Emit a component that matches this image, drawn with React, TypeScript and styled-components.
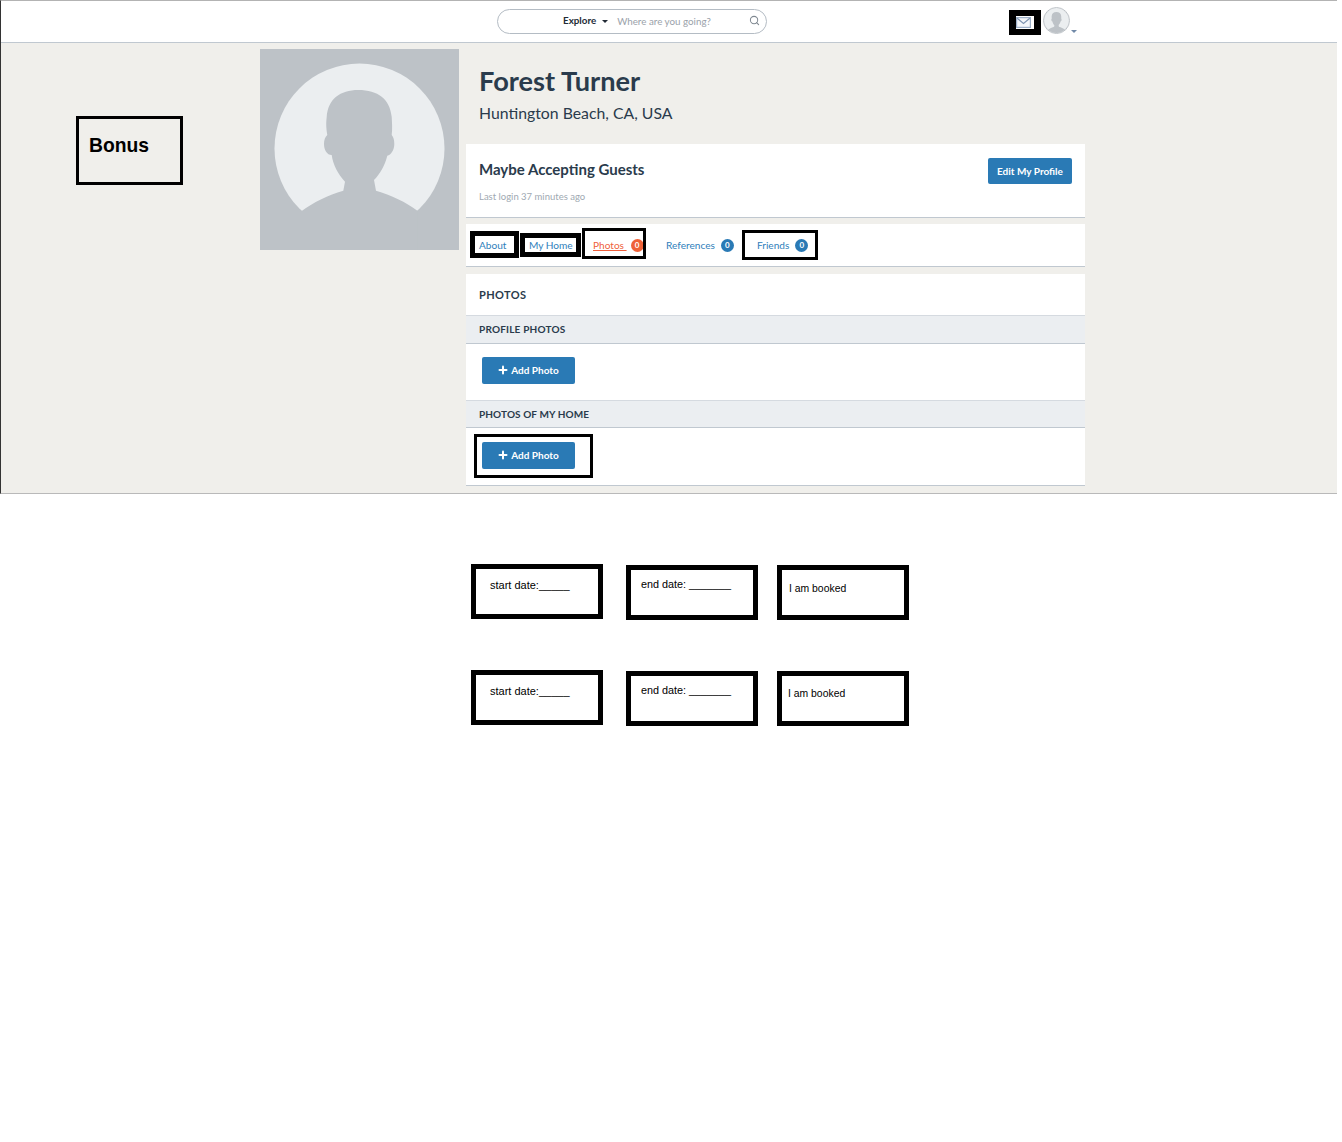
import { Plus, Search } from "lucide-react"
import styled, { createGlobalStyle } from "styled-components"

const Global = createGlobalStyle`
html, body {
  margin: 0;
  background: #fff;
}
* {
  box-sizing: border-box;
}
`

const Page = styled.div`
width: 1337px;
height: 1142px;
overflow: hidden;
background: #fff;
font-family: Lato, "Open Sans", sans-serif;
`

const Shot = styled.div`
height: 494px;
border-top: 1px solid #b3b3b3;
border-left: 1px solid #333;
border-bottom: 1px solid #b9b9b9;
background: #f0efeb;
`

const Header = styled.header`
height: 42px;
background: #fff;
border-bottom: 1px solid #c0c8d0;
display: flex;
align-items: flex-start;
padding: 8px 0 0 496px;
`

const SearchPill = styled.div`
width: 270px;
height: 25px;
border: 1px solid #b4bcc4;
border-radius: 13px;
display: flex;
align-items: center;
padding-left: 65px;
font-size: 9.8px;
`

const Explore = styled.span`
color: #222b36;
font-weight: 700;
margin-top: -4px;
`

const Caret = styled.span<{ $color: string }>`
width: 0;
height: 0;
border: 3px solid transparent;
border-top: 3px solid ${props => props.$color};
border-bottom: 0;
`

const ExploreCaret = styled(Caret)`
margin: -1px 9px 0 6px;
`

const Placeholder = styled.span`
color: #9aa2aa;
flex: 1;
margin-top: -2px;
`

const SearchIcon = styled(Search)`
color: #7f8891;
margin: -2px 6px 0 0;
`

const MailBox = styled.div`
margin: 1px 0 0 242px;
width: 32px;
height: 25px;
border: solid #000;
border-width: 6px 7px;
background: #fff;
display: flex;
align-items: center;
justify-content: flex-start;
`

const UserMenu = styled.div`
margin: -2px 0 0 2px;
display: flex;
align-items: flex-end;
gap: 1px;
`

const UserThumb = styled.svg`
width: 27px;
height: 27px;
border-radius: 50%;
border: 1px solid #bdc2c7;
display: block;
`

const UserCaret = styled(Caret)`
margin-bottom: 1px;
border-width: 3.5px;
border-bottom: 0;
`

const Main = styled.main`
display: flex;
align-items: flex-start;
padding-left: 75px;
`

const Bonus = styled.div`
width: 107px;
height: 69px;
margin: 73px 77px 0 0;
border: 3px solid #000;
padding: 16px 0 0 10px;
font-family: "Liberation Sans", Arial, sans-serif;
font-size: 19.3px;
font-weight: 700;
color: #000;
`

const Avatar = styled.svg`
width: 199px;
height: 201px;
margin-top: 6px;
flex-shrink: 0;
display: block;
`

const Column = styled.div`
width: 619px;
margin-left: 7px;
`

const Intro = styled.div`
height: 101px;
padding: 21px 0 0 13px;
`

const Name = styled.h1`
margin: 0;
font-size: 27.2px;
line-height: 34px;
font-weight: 700;
color: #2a3b4c;
`

const Location = styled.div`
margin-top: 4px;
font-size: 15.8px;
line-height: 22px;
color: #2a3b4c;
`

const Panel = styled.section`
background: #fff;
border-bottom: 1px solid #c0c8d0;
`

const StatusPanel = styled(Panel)`
height: 74px;
padding: 14px 13px 0;
display: flex;
justify-content: space-between;
align-items: flex-start;
`

const Status = styled.div`
font-size: 15px;
line-height: 22px;
font-weight: 700;
color: #2a3b4c;
`

const LastLogin = styled.div`
margin-top: 10px;
font-size: 9.5px;
line-height: 14px;
color: #a0a9b2;
`

const Button = styled.button`
border: 0;
border-radius: 2px;
background: #2a7ab5;
color: #fff;
font-family: inherit;
font-weight: 700;
font-size: 10px;
padding: 0;
display: flex;
align-items: center;
justify-content: center;
`

const EditButton = styled(Button)`
width: 84px;
height: 26px;
`

const TabsPanel = styled(Panel)`
height: 43px;
margin: 6px 0 7px;
padding-left: 13px;
display: flex;
`

const Tab = styled.div<{ $w: number; $active?: boolean }>`
position: relative;
width: ${props => props.$w}px;
height: 42px;
padding-top: 15px;
font-size: 10.1px;
line-height: 13px;
color: ${props => (props.$active ? "#ef5f3c" : "#2f80bb")};
display: flex;
align-items: flex-start;
white-space: pre;
`

const TabLabel = styled.span<{ $active?: boolean }>`
text-decoration: ${props => (props.$active ? "underline" : "none")};
`

const Badge = styled.span<{ $active?: boolean }>`
width: 13px;
height: 13px;
margin-left: ${props => (props.$active ? 4 : 6)}px;
border-radius: 50%;
background: ${props => (props.$active ? "#ef6238" : "#2a7ab5")};
color: #fff;
font-size: 8px;
font-weight: 700;
line-height: 13px;
text-align: center;
`

const Mark = styled.div<{ $left: number; $top: number; $w: number; $h: number; $b: number }>`
position: absolute;
left: ${props => props.$left}px;
top: ${props => props.$top}px;
width: ${props => props.$w}px;
height: ${props => props.$h}px;
border: ${props => props.$b}px solid #000;
pointer-events: none;
`

const PhotosTitle = styled.div`
height: 41px;
padding: 14px 13px 0;
font-size: 11px;
line-height: 14px;
font-weight: 700;
letter-spacing: 0.35px;
color: #2a3b4c;
background: #fff;
`

const SectionTitle = styled.div<{ $h: number; $track: number }>`
height: ${props => props.$h}px;
padding-left: 13px;
background: #ebeef1;
border-top: 1px solid #d5dae0;
border-bottom: 1px solid #c0c8d0;
font-size: 10px;
line-height: 26px;
font-weight: 700;
letter-spacing: ${props => props.$track}px;
color: #2a3b4c;
`

const SectionBody = styled.div<{ $h: number; $pad: number; $line?: boolean }>`
position: relative;
height: ${props => props.$h}px;
padding: ${props => props.$pad}px 0 0 16px;
background: #fff;
border-bottom: ${props => (props.$line ? "1px solid #c0c8d0" : "0")};
`

const AddButton = styled(Button)`
width: 93px;
height: 27px;
gap: 2px;
padding: 0 1px 1px 0;
`

const Wireframe = styled.div`
padding: 70px 0 0 471px;
font-family: "Liberation Sans", Arial, sans-serif;
color: #000;
`

const NoteRow = styled.div`
display: flex;
align-items: flex-start;
height: 106px;
`

const Note = styled.div<{ $gap: number; $drop: number; $pad: string; $size: number }>`
width: 132px;
height: 55px;
margin-left: ${props => props.$gap}px;
margin-top: ${props => props.$drop}px;
border: 5px solid #000;
padding: ${props => props.$pad};
font-size: ${props => props.$size}px;
line-height: 14px;
white-space: pre;
`

const silhouette =
  "M41.7 162 C54 153 68 146 83.3 141.7 L85 132.7 C78 125 73 116 71.7 106 C67 106 64 101 64 95 C64 91 65 88 67.3 86 C66 78 66 74 66.7 68 C68 50 80 41 98.3 41 C118 41 130 50 131.7 68 C132 74 132.5 80 131.7 86 C133.5 88 134.3 91 134.3 95 C134.3 101 131 106 127.3 106.7 C125 116 120 125 114 131 L116 141.7 C131 146 146 153 157.7 162 L157.7 201 L41.7 201 Z"

const Portrait = () => <>
  <rect width="199" height="201" fill="#bdc2c7" />
  <circle cx="99.5" cy="99.5" r="85" fill="#ebeef0" />
  <path d={silhouette} fill="#bdc2c7" />
</>

const tabs = [
  { label: "About", w: 50, mark: { $left: -9, $top: 7, $w: 49, $h: 27, $b: 5 } },
  { label: "My Home", w: 64, mark: { $left: -9, $top: 9, $w: 61, $h: 24, $b: 5 } },
  { label: "Photos ", w: 73, count: 0, active: true, mark: { $left: -11, $top: 4, $w: 64, $h: 31, $b: 3 } },
  { label: "References", w: 91, count: 0 },
  { label: "Friends", w: 80, count: 0, mark: { $left: -15, $top: 6, $w: 76, $h: 30, $b: 3 } },
]

const notes = [
  [
    { text: "start date:_____", gap: 0, drop: 0, pad: "9px 0 0 14px", size: 11 },
    { text: "end date: _______", gap: 23, drop: 1, pad: "7px 0 0 10px", size: 10.8 },
    { text: "I am booked", gap: 19, drop: 1, pad: "12px 0 0 7px", size: 10.4 },
  ],
  [
    { text: "start date:_____", gap: 0, drop: 0, pad: "9px 0 0 14px", size: 11 },
    { text: "end date: _______", gap: 23, drop: 1, pad: "7px 0 0 10px", size: 10.8 },
    { text: "I am booked", gap: 19, drop: 1, pad: "11px 0 0 6px", size: 10.4 },
  ],
]

export default function App() {
  return <Page>
    <Global />
    <Shot>
      <Header>
        <SearchPill>
          <Explore>Explore</Explore>
          <ExploreCaret $color="#222b36" />
          <Placeholder>Where are you going?</Placeholder>
          <SearchIcon size={11} strokeWidth={2.2} />
        </SearchPill>
        <MailBox>
          <svg width="15" height="11" viewBox="0 0 15 11">
            <rect x="0.6" y="0.6" width="13.8" height="9.8" fill="#f4f6f9" stroke="#9db0c8" strokeWidth="1.2" />
            <path d="M1.2 1.2 L7.5 6.4 L13.8 1.2" fill="none" stroke="#7f95b1" strokeWidth="1.2" />
          </svg>
        </MailBox>
        <UserMenu>
          <UserThumb viewBox="14 14 171 171">
            <Portrait />
          </UserThumb>
          <UserCaret $color="#7189a8" />
        </UserMenu>
      </Header>
      <Main>
        <Bonus>Bonus</Bonus>
        <Avatar viewBox="0 0 199 201">
          <Portrait />
        </Avatar>
        <Column>
          <Intro>
            <Name>Forest Turner</Name>
            <Location>Huntington Beach, CA, USA</Location>
          </Intro>
          <StatusPanel>
            <div>
              <Status>Maybe Accepting Guests</Status>
              <LastLogin>Last login 37 minutes ago</LastLogin>
            </div>
            <EditButton>Edit My Profile</EditButton>
          </StatusPanel>
          <TabsPanel>
            {tabs.map(tab => <Tab key={tab.label} $w={tab.w} $active={tab.active}>
              {tab.mark && <Mark {...tab.mark} />}
              <TabLabel $active={tab.active}>{tab.label}</TabLabel>
              {tab.count !== undefined && <Badge $active={tab.active}>{tab.count}</Badge>}
            </Tab>)}
          </TabsPanel>
          <PhotosTitle>PHOTOS</PhotosTitle>
          <SectionTitle $h={29} $track={0.2}>PROFILE PHOTOS</SectionTitle>
          <SectionBody $h={56} $pad={13}>
            <AddButton><Plus size={12} strokeWidth={4} />Add Photo</AddButton>
          </SectionBody>
          <SectionTitle $h={28} $track={0.1}>PHOTOS OF MY HOME</SectionTitle>
          <SectionBody $h={58} $pad={14} $line>
            <Mark $left={8} $top={6} $w={119} $h={44} $b={3} />
            <AddButton><Plus size={12} strokeWidth={4} />Add Photo</AddButton>
          </SectionBody>
        </Column>
      </Main>
    </Shot>
    <Wireframe>
      {notes.map((row, i) => <NoteRow key={i}>
        {row.map(note => <Note key={note.text} $gap={note.gap} $drop={note.drop} $pad={note.pad} $size={note.size}>{note.text}</Note>)}
      </NoteRow>)}
    </Wireframe>
  </Page>
}
